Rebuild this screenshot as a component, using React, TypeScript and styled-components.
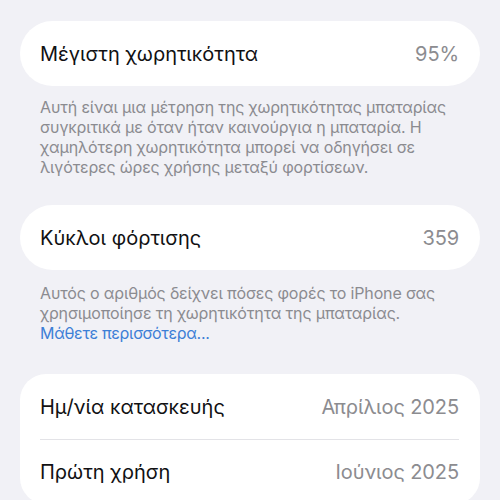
import React from "react";
import styled, { createGlobalStyle } from "styled-components";

const Global = createGlobalStyle`
  html, body { margin: 0; padding: 0; background: #f1f1f6; }
  body { font-family: Inter, "Noto Sans", "Liberation Sans", sans-serif; -webkit-font-smoothing: antialiased; }
`;

const Page = styled.div`
  width: 500px;
  height: 500px;
  overflow: hidden;
  background: #f1f1f6;
  padding: 21px 20px 0;
  box-sizing: border-box;
  display: flex;
  flex-direction: column;
`;

const Card = styled.div<{ $radius: number }>`
  background: #ffffff;
  border-radius: ${(p) => p.$radius}px;
  display: flex;
  flex-direction: column;
  padding: 0 21px 0 20px;
  flex-shrink: 0;
`;

const Row = styled.div<{ $divider?: boolean }>`
  height: 65px;
  display: flex;
  align-items: center;
  justify-content: space-between;
  border-top: ${(p) => (p.$divider ? "1px solid #e3e3e7" : "none")};
  box-sizing: border-box;
`;

const Label = styled.span`
  font-size: 20px;
  color: #111113;
  letter-spacing: 0;
`;

const Value = styled.span`
  font-size: 20px;
  color: #8c8c90;
  letter-spacing: -0.1px;
`;

const Footer = styled.p<{ $top: number; $bottom: number }>`
  margin: ${(p) => p.$top}px 0 ${(p) => p.$bottom}px;
  padding: 0 20px;
  font-size: 16px;
  line-height: 20px;
  color: #8b8b90;
  letter-spacing: -0.15px;
`;

const Link = styled.span`
  color: #3d7fd6;
  letter-spacing: -0.3px;
`;

export default function App() {
  return (
    <>
      <Global />
      <Page>
        <Card $radius={33}>
          <Row>
            <Label>Μέγιστη χωρητικότητα</Label>
            <Value>95%</Value>
          </Row>
        </Card>
        <Footer $top={11} $bottom={28}>
          Αυτή είναι μια μέτρηση της χωρητικότητας μπαταρίας συγκριτικά με όταν
          ήταν καινούργια η μπαταρία. Η χαμηλότερη χωρητικότητα μπορεί να
          οδηγήσει σε λιγότερες ώρες χρήσης μεταξύ φορτίσεων.
        </Footer>
        <Card $radius={33}>
          <Row>
            <Label>Κύκλοι φόρτισης</Label>
            <Value>359</Value>
          </Row>
        </Card>
        <Footer $top={13} $bottom={31}>
          Αυτός ο αριθμός δείχνει πόσες φορές το iPhone σας χρησιμοποίησε τη
          χωρητικότητα της μπαταρίας.
          <br />
          <Link>Μάθετε περισσότερα...</Link>
        </Footer>
        <Card $radius={26}>
          <Row>
            <Label>Ημ/νία κατασκευής</Label>
            <Value>Απρίλιος 2025</Value>
          </Row>
          <Row $divider>
            <Label>Πρώτη χρήση</Label>
            <Value>Ιούνιος 2025</Value>
          </Row>
        </Card>
      </Page>
    </>
  );
}
